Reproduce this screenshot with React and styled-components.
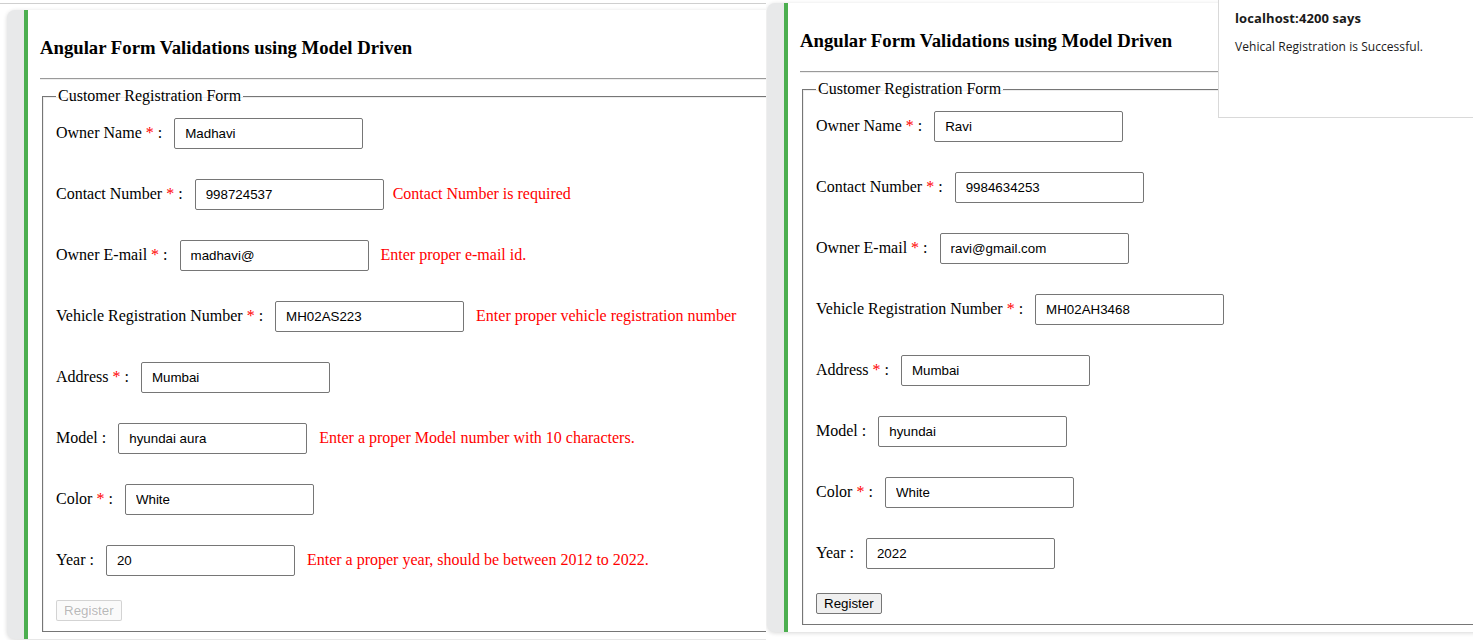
import React from "react";
import styled, { createGlobalStyle } from "styled-components";

const Global = createGlobalStyle`
  html, body { margin: 0; padding: 0; background: #ffffff; }
  body { font-family: "Liberation Serif", "Times New Roman", serif; font-size: 16px; color: #000; }
  #root { width: 1473px; height: 640px; overflow: hidden; }
`;

const Page = styled.div`
  position: relative;
  display: flex;
  width: 1473px;
  height: 640px;
  overflow: hidden;
  background: #fff;
`;

const Shot = styled.div`
  position: relative;
  flex: ${(p) => (p.$width ? `0 0 ${p.$width}px` : "1 1 auto")};
  height: 640px;
  overflow: hidden;
  padding: ${(p) => p.$padTop}px 0 0 ${(p) => p.$padLeft}px;
  box-sizing: border-box;
`;

const TopRule = styled.div`
  height: 0;
  border-top: 1px solid #cfcfcf;
  margin: 3px 0 6px -7px;
`;

const Card = styled.div`
  display: flex;
  width: 900px;
  background: #e8e9ea;
  padding-left: 17px;
  border-radius: 8px 0 0 8px;
  box-shadow: 0 1px 4px rgba(0, 0, 0, 0.16);
`;

const CardBody = styled.div`
  flex: 1;
  background: #fff;
  border-left: 4px solid #4caf50;
  padding: 27px 0 8px 12px;
`;

const Title = styled.h3`
  margin: 0;
  font-size: 18.72px;
  font-weight: bold;
  line-height: normal;
`;

const Rule = styled.hr`
  margin: 19px 0 7px;
  height: 0;
  border: 0;
  border-top: 1px solid #9a9a9a;
  border-bottom: 1px solid #eeeeee;
`;

const Fieldset = styled.fieldset`
  margin: 0 2px;
  padding: 5.6px 12px 10px 13px;
  border-style: solid;
  border-width: 1px 0 0 1px;
  border-color: #767676;
  box-shadow: inset 1px 1px 0 #ededed, 0 1px 0 #767676;
`;

const Legend = styled.legend`
  padding: 0 2px;
  font-size: 16px;
  line-height: normal;
`;

const Rows = styled.div`
  display: flex;
  flex-direction: column;
  gap: 30px;
  padding-top: 7px;
`;

const Row = styled.div`
  display: flex;
  align-items: center;
  height: 31px;
  white-space: nowrap;
`;

const Label = styled.label`
  margin-right: 12px;
  font-size: 16px;
`;

const Star = styled.span`
  color: #ff0000;
`;

const Input = styled.input`
  box-sizing: border-box;
  width: 189px;
  height: 31px;
  padding: 0 10px;
  border: 1px solid #767676;
  border-radius: 2px;
  font-family: "Liberation Sans", Arial, sans-serif;
  font-size: 13.33px;
  color: #000;
  background: #fff;
  outline: none;
`;

const Error = styled.span`
  margin-left: ${(p) => (p.$tight ? 9 : 12)}px;
  color: #ff0000;
  font-size: 16px;
`;

const Button = styled.button`
  margin-top: 24px;
  box-sizing: border-box;
  height: 21px;
  padding: 1px 7px;
  font-family: "Liberation Sans", Arial, sans-serif;
  font-size: 13.33px;
  line-height: normal;
  border-radius: 2px;
  border: 1px solid ${(p) => (p.disabled ? "rgba(118,118,118,0.3)" : "#767676")};
  background: ${(p) => (p.disabled ? "rgba(239,239,239,0.3)" : "#efefef")};
  color: ${(p) => (p.disabled ? "rgba(16,16,16,0.3)" : "#000")};
`;

const Dialog = styled.div`
  position: absolute;
  top: -1px;
  left: 1218px;
  right: -1px;
  height: 119px;
  box-sizing: border-box;
  background: #fff;
  border: 1px solid #d9d9d9;
  padding: 9px 0 0 16px;
  font-family: "Open Sans", "Noto Sans", sans-serif;
  color: #1a1a1a;
`;

const DialogTitle = styled.div`
  font-weight: bold;
  font-size: 13px;
  line-height: 18px;
  letter-spacing: 0.1px;
`;

const DialogText = styled.div`
  margin-top: 12px;
  font-size: 12px;
  line-height: 16px;
  letter-spacing: 0.05px;
`;

const leftRows = [
  { label: "Owner Name", req: true, value: "Madhavi" },
  { label: "Contact Number", req: true, value: "998724537", error: "Contact Number is required", tight: true },
  { label: "Owner E-mail", req: true, value: "madhavi@", error: "Enter proper e-mail id." },
  { label: "Vehicle Registration Number", req: true, value: "MH02AS223", error: "Enter proper vehicle registration number" },
  { label: "Address", req: true, value: "Mumbai" },
  { label: "Model", req: false, value: "hyundai aura", error: "Enter a proper Model number with 10 characters." },
  { label: "Color", req: true, value: "White" },
  { label: "Year", req: false, value: "20", error: "Enter a proper year, should be between 2012 to 2022." },
];

const rightRows = [
  { label: "Owner Name", req: true, value: "Ravi" },
  { label: "Contact Number", req: true, value: "9984634253" },
  { label: "Owner E-mail", req: true, value: "ravi@gmail.com" },
  { label: "Vehicle Registration Number", req: true, value: "MH02AH3468" },
  { label: "Address", req: true, value: "Mumbai" },
  { label: "Model", req: false, value: "hyundai" },
  { label: "Color", req: true, value: "White" },
  { label: "Year", req: false, value: "2022" },
];

function FormCard({ rows, disabled }) {
  return (
    <Card>
      <CardBody>
        <Title>Angular Form Validations using Model Driven</Title>
        <Rule />
        <Fieldset>
          <Legend>Customer Registration Form</Legend>
          <Rows>
            {rows.map((r) => (
              <Row key={r.label}>
                <Label>
                  {r.label} {r.req && <><Star>*</Star> </>}:
                </Label>
                <Input readOnly value={r.value} />
                {r.error && <Error $tight={r.tight}>{r.error}</Error>}
              </Row>
            ))}
          </Rows>
          <Button disabled={disabled}>Register</Button>
        </Fieldset>
      </CardBody>
    </Card>
  );
}

export default function App() {
  return (
    <>
      <Global />
      <Page>
        <Shot $width={766} $padTop={0} $padLeft={7}>
          <TopRule />
          <FormCard rows={leftRows} disabled />
        </Shot>
        <Shot $padTop={3} $padLeft={1}>
          <FormCard rows={rightRows} />
        </Shot>
        <Dialog>
          <DialogTitle>localhost:4200 says</DialogTitle>
          <DialogText>Vehical Registration is Successful.</DialogText>
        </Dialog>
      </Page>
    </>
  );
}
